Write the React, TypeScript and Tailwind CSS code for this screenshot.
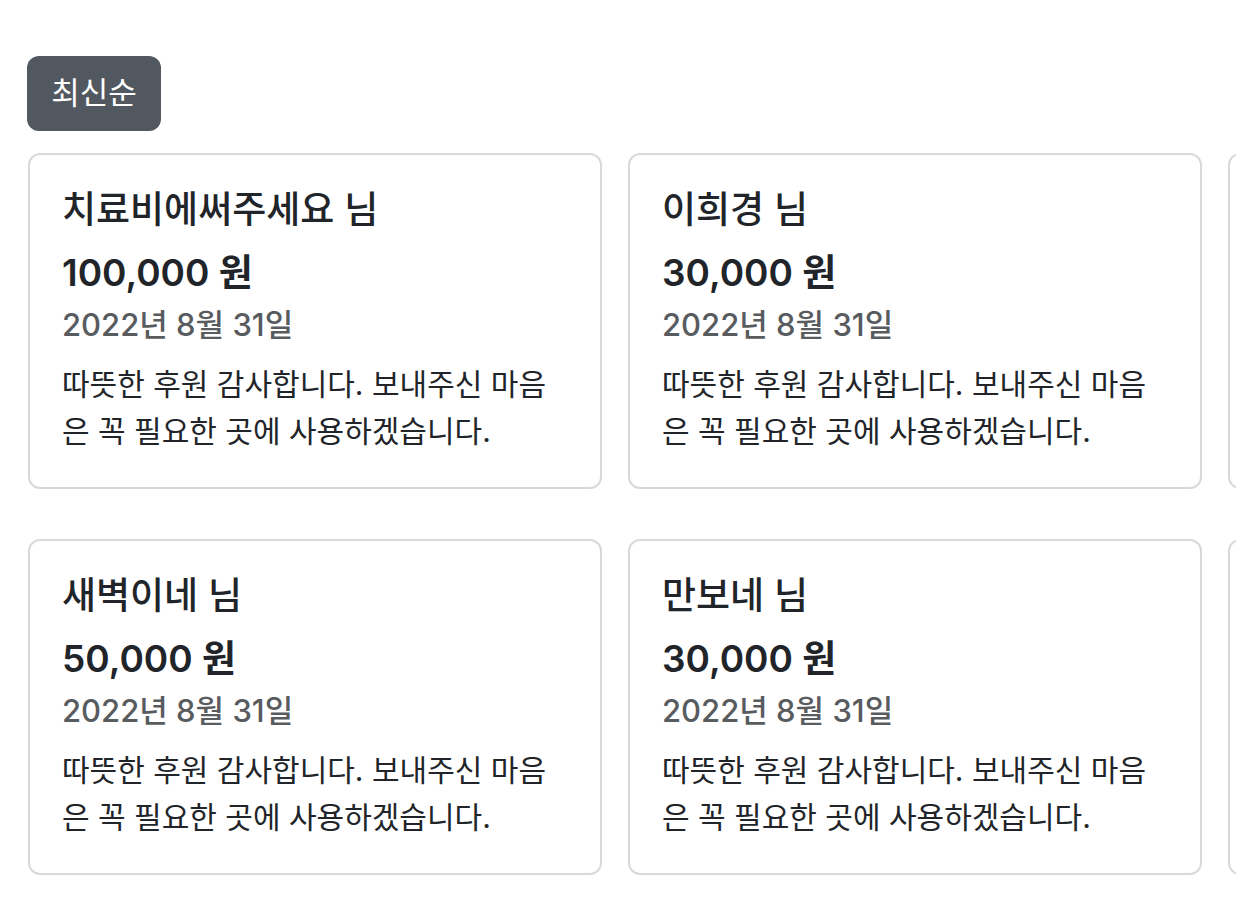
const donations = [
  { name: '치료비에써주세요', amount: '100,000' },
  { name: '이희경', amount: '30,000' },
  { name: '익명', amount: '10,000' },
  { name: '새벽이네', amount: '50,000' },
  { name: '만보네', amount: '30,000' },
  { name: '익명', amount: '20,000' },
];

function DonationCard({ name, amount }: { name: string; amount: string }) {
  return (
    <div className="h-[336px] rounded-[12px] border-2 border-[#d9d9d9] bg-white px-[32px] pt-[30px]">
      <h5 className="text-[37px] font-medium leading-[50px] text-[#212529]">{name} 님</h5>
      <div className="mt-[15px] text-[37px] font-semibold leading-[46px] text-[#212529]">{amount} 원</div>
      <div className="mt-[9px] text-[31px] font-medium leading-[40px] text-[#595c5f]">2022년 8월 31일</div>
      <p className="mt-[16px] text-[30px] leading-[47px] text-[#212529]">
        따뜻한 후원 감사합니다. 보내주신 마음은 꼭 필요한 곳에 사용하겠습니다.
      </p>
    </div>
  );
}

export default function App() {
  return (
    <div
      className="min-h-screen w-full overflow-hidden bg-white"
      style={{ fontFamily: 'Inter, "Noto Sans CJK KR", sans-serif' }}
    >
      <div className="px-[27px] pt-[56px]">
        <button className="h-[75px] w-[134px] rounded-[12px] bg-[#52585f] text-[31px] text-white">
          최신순
        </button>
        <div className="mt-[22px] grid w-[1774px] grid-cols-[repeat(3,574px)] gap-x-[26px] gap-y-[50px] pl-[1px]">
          {donations.map((d, i) => (
            <DonationCard key={i} name={d.name} amount={d.amount} />
          ))}
        </div>
      </div>
    </div>
  );
}
